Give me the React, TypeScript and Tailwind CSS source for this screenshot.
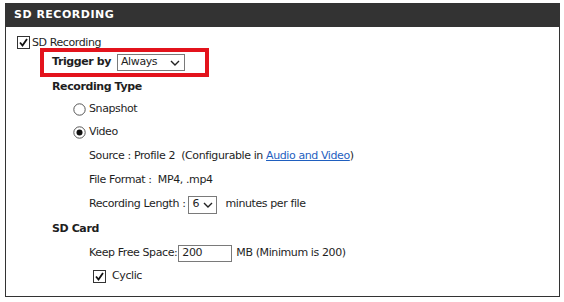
import React from "react";

const Check: React.FC = () => (
  <svg viewBox="0 0 13 13" className="h-[13px] w-[13px] shrink-0">
    <rect x="0.5" y="0.5" width="12" height="12" fill="#fff" stroke="#333" />
    <polyline points="3,6.5 5.5,9.5 10,3" fill="none" stroke="#111" strokeWidth="1.8" />
  </svg>
);

const Radio: React.FC<{ on?: boolean }> = ({ on }) => (
  <svg viewBox="0 0 13 13" className="h-[13px] w-[13px] shrink-0">
    <circle cx="6.5" cy="6.5" r="5.7" fill="#fff" stroke="#555" />
    {on && <circle cx="6.5" cy="6.5" r="3" fill="#111" />}
  </svg>
);

const Chevron: React.FC = () => (
  <svg viewBox="0 0 10 6" className="h-[6px] w-[10px]">
    <polyline points="1,1 5,5 9,1" fill="none" stroke="#222" strokeWidth="1.4" />
  </svg>
);

const App: React.FC = () => {
  return (
    <div
      className="h-[302px] w-[564px] bg-white pt-[3px] pl-[5px] text-[11px] tracking-[-0.4px] text-[#1e1e1e]"
      style={{ fontFamily: '"DejaVu Sans", Verdana, sans-serif' }}
    >
      <div className="w-[555px]">
        <div className="flex h-[24px] items-center bg-[#333333] pl-[9px] text-[11px] font-bold tracking-[0.5px] text-white">
          SD RECORDING
        </div>
        <div className="h-[270px] border-x border-b border-[#333] pt-[9px]">
          <div className="flex h-[12px] items-center pl-[11px]">
            <Check />
            <span className="ml-[2px] mt-[2px]">SD Recording</span>
          </div>

          <div className="ml-[34px] flex h-[29px] w-[169px] items-center border-4 border-[#e3131c] pl-[8px]">
            <span className="font-bold">Trigger by</span>
            <div className="ml-[6px] flex h-[17px] w-[68px] items-center justify-between border border-[#7a7a7a] pl-[3px] pr-[4px]">
              <span>Always</span>
              <Chevron />
            </div>
          </div>

          <div className="flex h-[20px] items-center pl-[46px] font-bold">Recording Type</div>

          <div className="flex h-[24px] items-center pl-[67px]">
            <Radio />
            <span className="ml-[3px]">Snapshot</span>
          </div>
          <div className="flex h-[23px] items-center pl-[67px]">
            <Radio on />
            <span className="ml-[3px]">Video</span>
          </div>

          <div className="flex h-[24px] items-center whitespace-pre pl-[83px]">
            <span>Source : Profile 2  (Configurable in </span>
            <a href="#" className="text-[#1f5fbf] underline">
              Audio and Video
            </a>
            <span>)</span>
          </div>
          <div className="flex h-[24px] items-center whitespace-pre pl-[83px]">File Format :  MP4, .mp4</div>
          <div className="flex h-[25px] items-center pl-[83px]">
            <span>Recording Length :</span>
            <div className="ml-[3px] flex h-[18px] w-[29px] items-center justify-between border border-[#7a7a7a] pl-[3px] pr-[3px]">
              <span>6</span>
              <Chevron />
            </div>
            <span className="ml-[8px]">minutes per file</span>
          </div>

          <div className="flex h-[24px] items-center pl-[46px] font-bold">SD Card</div>

          <div className="flex h-[24px] items-center pl-[83px]">
            <span>Keep Free Space:</span>
            <div className="ml-[1px] flex h-[17px] w-[54px] items-center border border-[#7a7a7a] pl-[3px]">200</div>
            <span className="ml-[4px]">MB (Minimum is 200)</span>
          </div>
          <div className="flex h-[23px] items-center pl-[87px]">
            <Check />
            <span className="ml-[6px]">Cyclic</span>
          </div>
        </div>
      </div>
    </div>
  );
};

export default App;
